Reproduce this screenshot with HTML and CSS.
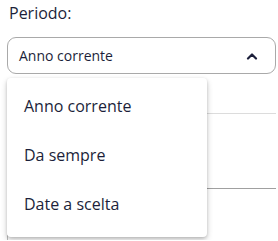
FILE: index.html
```html
<!DOCTYPE html>
<html lang="it">
<head>
    <meta charset="UTF-8">
    <meta name="viewport" content="width=device-width, initial-scale=1.0">
    <title>Periodo</title>
    <link rel="stylesheet" href="styles.css">
</head>
<body>
    <div class="filter">
        <label class="filter-label">Periodo:</label>
        <div class="select">
            <span class="select-value">Anno corrente</span>
            <svg class="chevron" width="12" height="8" viewBox="0 0 12 8">
                <path d="M2 6.5 L6 2.5 L10 6.5" fill="none" stroke="#1c1f3a" stroke-width="2.2" stroke-linecap="round" stroke-linejoin="round"/>
            </svg>
        </div>

        <div class="behind">
            <div class="row"></div>
            <div class="row dark"></div>
            <div class="box"></div>
        </div>

        <ul class="menu">
            <li>Anno corrente</li>
            <li>Da sempre</li>
            <li>Date a scelta</li>
        </ul>
    </div>
</body>
</html>
```

FILE: styles.css
```css
/* pagina */
body {
    margin: 0;
    padding: 0 2px 0 7px;
    font-family: "Open Sans", "Liberation Sans", sans-serif;
    font-weight: 500;
    color: #1c1f3a;
    background: #fff;
    overflow: hidden;
}

.filter { position: relative; }

.filter-label {
    display: block;
    font-size: 16px;
    line-height: 20px;
    padding-top: 3px;
    margin-left: 2px;
    margin-bottom: 14px;
}

/* select chiuso */
.select {
    height: 35px;
    border: 1px solid #a9a9a9;
    border-radius: 9px;
    display: flex;
    align-items: center;
    justify-content: space-between;
    padding: 0 17px 0 11px;
}
.select-value { font-size: 14px; }

/* contenuto sotto al menu */
.behind { margin-top: 39px; }
.row { height: 1px; background: #dcdcdc; margin-bottom: 74px; }
.row.dark { background: #a0a0a0; margin-bottom: 46px; }
.box { height: 5px; border-left: 1px solid #bdbdbd; }

/* menu a tendina */
.menu {
    position: absolute;
    top: 78px;
    left: 0;
    width: 200px;
    margin: 0;
    padding: 4px 0 8px;
    list-style: none;
    background: #fff;
    border-radius: 4px;
    box-shadow: 0 3px 6px rgba(0, 0, 0, 0.2), 0 1px 3px rgba(0, 0, 0, 0.15);
}
.menu li {
    font-size: 16px;
    line-height: 49px;
    padding-left: 17px;
}
```
